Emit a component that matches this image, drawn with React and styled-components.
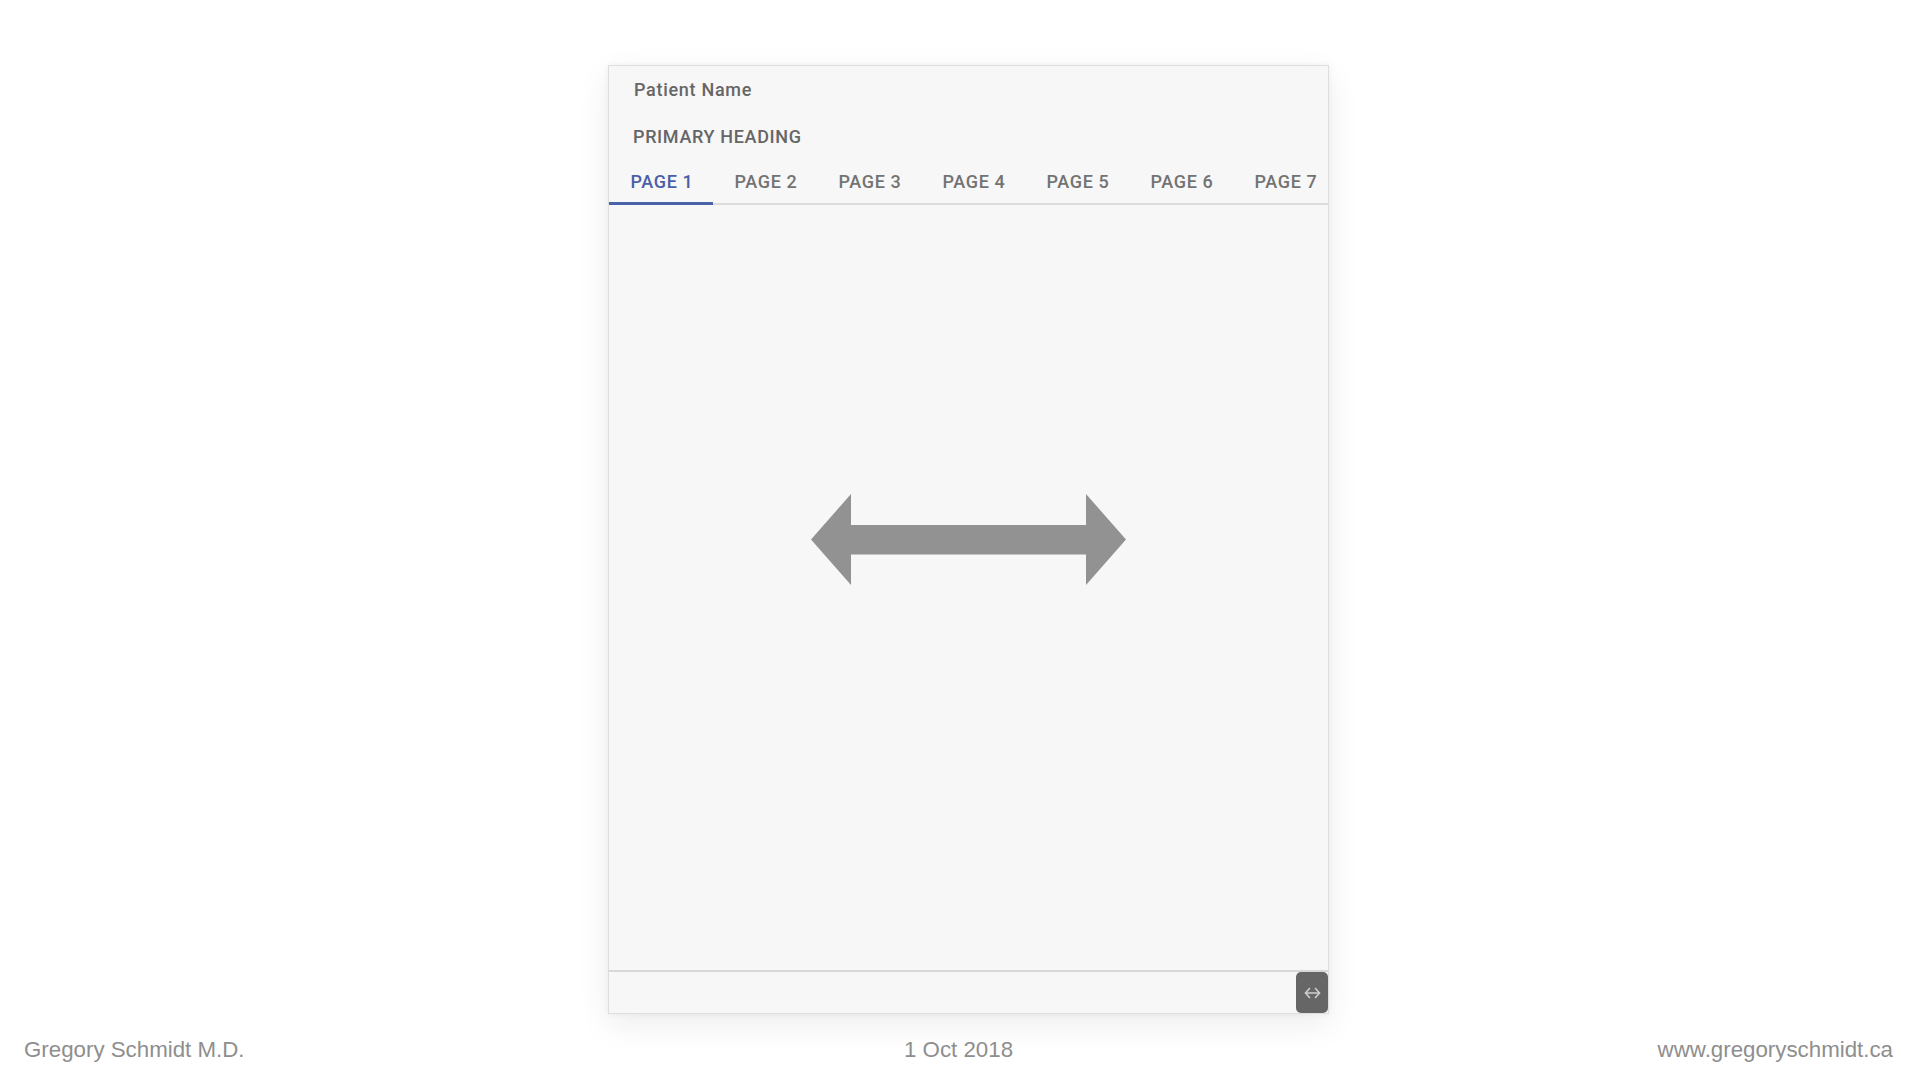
import React from 'react';
import styled, { createGlobalStyle } from 'styled-components';

const GlobalStyle = createGlobalStyle`
  html, body {
    margin: 0;
    padding: 0;
    background: #ffffff;
  }
  body {
    font-family: Roboto, "Liberation Sans", sans-serif;
  }
`;

const Page = styled.div`
  width: 1920px;
  height: 1080px;
  display: flex;
  flex-direction: column;
  overflow: hidden;
`;

const Stage = styled.div`
  display: flex;
  justify-content: center;
  padding: 65px 0 0 17px;
`;

const Panel = styled.div`
  width: 721px;
  height: 949px;
  box-sizing: border-box;
  border: 1px solid #dedede;
  background: #f7f7f7;
  box-shadow: 0 10px 30px rgba(0, 0, 0, 0.08), 0 0 6px rgba(0, 0, 0, 0.05);
  display: flex;
  flex-direction: column;
  overflow: hidden;
`;

const Header = styled.div`
  padding: 12px 0 0 25px;
  display: flex;
  flex-direction: column;
  gap: 23px;
`;

const PatientName = styled.div`
  font-size: 18px;
  line-height: 24px;
  font-weight: 500;
  letter-spacing: 0.7px;
  color: #666666;
`;

const Heading = styled.div`
  margin-left: -1px;
  font-size: 18px;
  line-height: 24px;
  font-weight: 500;
  letter-spacing: 0.65px;
  color: #666666;
  text-transform: uppercase;
`;

const TabBar = styled.div`
  margin-top: 7px;
  display: flex;
  height: 49px;
  box-shadow: inset 0 -2px 0 #dcdcdc;
`;

const Tab = styled.div`
  flex: 0 0 104px;
  display: flex;
  align-items: center;
  justify-content: center;
  padding: 2px 0 0 2px;
  box-sizing: border-box;
  font-size: 18px;
  line-height: 24px;
  font-weight: 500;
  letter-spacing: 0.65px;
  color: ${p => (p.$active ? '#4a5fa8' : '#737373')};
  box-shadow: ${p => (p.$active ? 'inset 0 -3px 0 #4a62a8' : 'none')};
`;

const Content = styled.div`
  flex: 1;
  display: flex;
  justify-content: center;
  padding-top: 289px;
`;

const BottomBar = styled.div`
  height: 41px;
  border-top: 2px solid #d8d8d8;
  display: flex;
  justify-content: flex-end;
`;

const IconButton = styled.div`
  width: 32px;
  height: 41px;
  background: #666666;
  border-radius: 5px;
  display: flex;
  align-items: center;
  justify-content: center;
`;

const Footer = styled.div`
  display: grid;
  grid-template-columns: 1fr auto 1fr;
  padding: 23px 27px 0 24px;
  font-family: "Liberation Sans", Arial, sans-serif;
  font-size: 22.3px;
  line-height: 26px;
  color: #8e8e8e;
`;

const FooterRight = styled.div`
  text-align: right;
`;

const tabs = ['Page 1', 'Page 2', 'Page 3', 'Page 4', 'Page 5', 'Page 6', 'Page 7'];

function BigArrow() {
  return (
    <svg width="315" height="91" viewBox="0 0 315 91">
      <polygon
        points="0,45.5 40,0 40,31 275,31 275,0 315,45.5 275,91 275,60.5 40,60.5 40,91"
        fill="#929292"
      />
    </svg>
  );
}

function SmallArrow() {
  return (
    <svg width="17" height="12" viewBox="0 0 17 12" fill="none" stroke="#cfcfcf" strokeWidth="1.6" strokeLinecap="round" strokeLinejoin="round">
      <path d="M1.5 6 H15.5" />
      <path d="M5.5 1.5 L1.5 6 L5.5 10.5" />
      <path d="M11.5 1.5 L15.5 6 L11.5 10.5" />
    </svg>
  );
}

export default function App() {
  return (
    <Page>
      <GlobalStyle />
      <Stage>
        <Panel>
          <Header>
            <PatientName>Patient Name</PatientName>
            <Heading>Primary Heading</Heading>
          </Header>
          <TabBar>
            {tabs.map((t, i) => (
              <Tab key={t} $active={i === 0}>{t.toUpperCase()}</Tab>
            ))}
          </TabBar>
          <Content>
            <BigArrow />
          </Content>
          <BottomBar>
            <IconButton>
              <SmallArrow />
            </IconButton>
          </BottomBar>
        </Panel>
      </Stage>
      <Footer>
        <div>Gregory Schmidt M.D.</div>
        <div>1 Oct 2018</div>
        <FooterRight>www.gregoryschmidt.ca</FooterRight>
      </Footer>
    </Page>
  );
}
